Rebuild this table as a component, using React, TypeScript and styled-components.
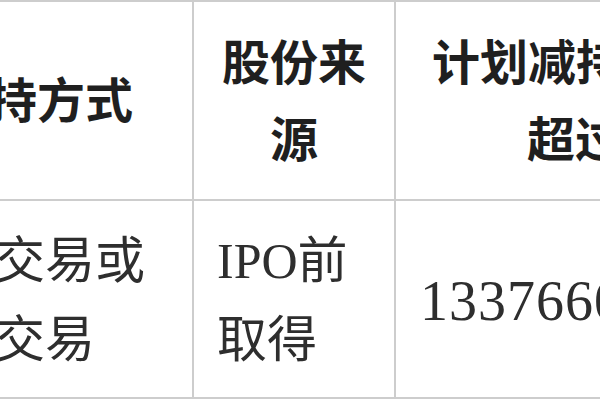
import React from "react";
import styled, { createGlobalStyle } from "styled-components";

const Global = createGlobalStyle`
  html, body { margin: 0; padding: 0; background: #ffffff; }
  body { width: 600px; height: 400px; overflow: hidden; }
`;

const Table = styled.div`
  display: grid;
  grid-template-columns: 192px 200px 1fr;
  grid-template-rows: 197px 196px;
  gap: 2px;
  padding: 2px 0;
  width: 600px;
  background: #cdcdcd;
  overflow: hidden;
`;

const Cell = styled.div<{ $align: "flex-start" | "center" | "flex-end"; $padL?: number; $padR?: number; $head?: boolean }>`
  background: #ffffff;
  display: flex;
  flex-direction: column;
  justify-content: center;
  align-items: ${(p) => p.$align};
  padding-left: ${(p) => p.$padL ?? 0}px;
  padding-right: ${(p) => p.$padR ?? 0}px;
  padding-top: ${(p) => (p.$head ? 2 : 4)}px;
  overflow: hidden;
  white-space: nowrap;
  font-family: "Liberation Serif", "Noto Sans CJK SC", serif;
  color: ${(p) => (p.$head ? "#1f1f1f" : "#2e2e2e")};
  font-size: ${(p) => (p.$head ? 48 : 50)}px;
  line-height: ${(p) => (p.$head ? 77 : 79)}px;
  font-weight: ${(p) => (p.$head ? 700 : 400)};
  min-width: 0;
`;

const Block = styled.div`
  display: flex;
  flex-direction: column;
  align-items: flex-start;
`;

const Line = styled.div<{ $indent?: number }>`
  padding-left: ${(p) => p.$indent ?? 0}px;
  align-self: stretch;
`;

const CenterLine = styled.div`
  text-align: center;
`;

const Num = styled.span`
  font-family: "Liberation Serif", serif;
  font-size: 56px;
  letter-spacing: 1px;
`;

export default function App() {
  return (
    <>
      <Global />
      <Table>
        <Cell $align="flex-end" $padR={59} $head>
          减持方式
        </Cell>
        <Cell $align="center" $head>
          <CenterLine>股份来</CenterLine>
          <CenterLine>源</CenterLine>
        </Cell>
        <Cell $align="flex-start" $head>
          <Line $indent={36}>计划减持数量不</Line>
          <Line $indent={131}>超过</Line>
        </Cell>

        <Cell $align="flex-end" $padR={47}>
          <Block>
            <div>竞价交易或</div>
            <div>大宗交易</div>
          </Block>
        </Cell>
        <Cell $align="flex-start" $padL={23}>
          <div>IPO前</div>
          <div>取得</div>
        </Cell>
        <Cell $align="flex-start" $padL={24}>
          <Num>13376600</Num>
        </Cell>
      </Table>
    </>
  );
}
